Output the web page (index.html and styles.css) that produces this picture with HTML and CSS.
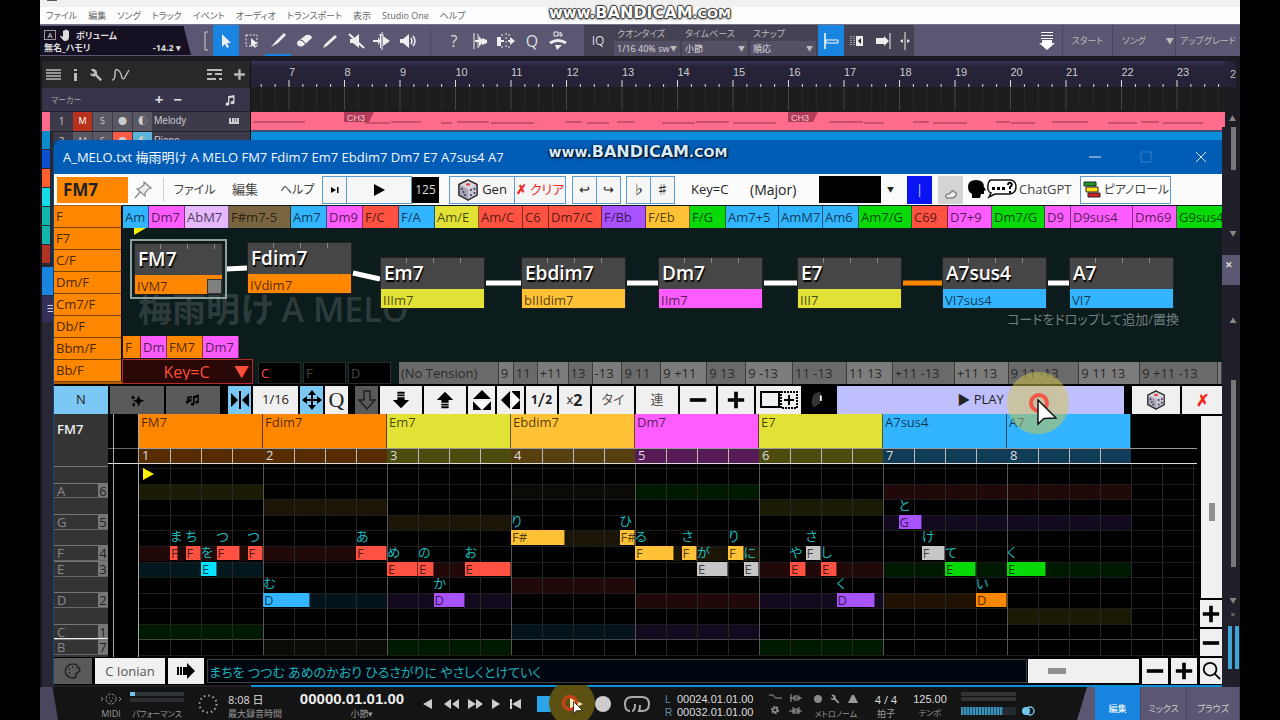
FILE: index.html
```html
<!DOCTYPE html>
<html lang="ja">
<head>
<meta charset="utf-8">
<title>A_MELO.txt</title>
<link rel="stylesheet" href="styles.css">
</head>
<body>
<svg class="defs" aria-hidden="true">
  <symbol id="i-dice" viewBox="0 0 22 22"><path d="M11 1 20 5.500V16L11 21 2 16V5.500Z" fill="#ddd6e0" stroke="#333" stroke-width="1.300"/><path d="M11 10V21L2 16V5.500Z" fill="#aaa4b4"/><path d="M11 10 20 5.500V16L11 21Z" fill="#c9c3d2"/><path d="M11 1 20 5.500V16L11 21 2 16V5.500Z" fill="none" stroke="#333" stroke-width="1.300"/><ellipse cx="11" cy="5.500" rx="2.200" ry="1.300" fill="#d44"/><g fill="#335"><circle cx="5" cy="10" r="1"/><circle cx="8" cy="16" r="1"/><circle cx="6.500" cy="13" r="1"/><circle cx="14" cy="11" r="1"/><circle cx="17.500" cy="10" r="1"/><circle cx="14" cy="16" r="1"/><circle cx="17.500" cy="14" r="1"/></g></symbol>
  <symbol id="i-cursor" viewBox="0 0 20 28"><path d="M1 1V25L7 19.500 19 19Z" fill="#fff" stroke="#111" stroke-width="1.500"/></symbol>
  <symbol id="i-minus" viewBox="0 0 22 22"><path d="M2 9h18v4H2z"/></symbol>
  <symbol id="i-plus" viewBox="0 0 22 22"><path d="M9 2h4v7h7v4h-7v7H9v-7H2V9h7z"/></symbol>
  <symbol id="i-down" viewBox="0 0 22 22"><path d="M7 2h8v2H7zm0 3h8v2H7zm0 3h8v3h5l-9 9-9-9h5z"/></symbol>
  <symbol id="i-note" viewBox="0 0 22 22"><path d="M8 5 18 3v12a3 2.500 0 1 1-2-2V7l-6 1v9a3 2.500 0 1 1-2-2z"/></symbol>
  <symbol id="i-wrench" viewBox="0 0 16 16"><path d="M2 2a4.500 4.500 0 0 1 7 5l6 6-2 2-6-6a4 4 0 0 1-6-3l3 1 2-2z"/></symbol>
</svg>

<div class="stage">
<div class="daw">
  <div class="edge"><i></i></div>
  <nav class="menubar">
    <a href="#">ファイル</a><a href="#">編集</a><a href="#">ソング</a><a href="#">トラック</a><a href="#">イベント</a><a href="#">オーディオ</a><a href="#">トランスポート</a><a href="#">表示</a><a href="#">Studio One</a><a href="#">ヘルプ</a>
  </nav>

  <div class="toolbar">
    <div class="param">
      <div class="param-row"><span class="abox">A</span><svg width="12" height="12" viewBox="0 0 12 12" fill="#ddd"><path d="M3 6V2q1-1 1.500 0V5V1q1-1 1.500 0V5V1q1-1 1.500 0V5V2q1-1 1.500 0V8q0 4-4 4Q3 12 0 7q1-1 3 1z"/></svg><b>ボリューム</b></div>
      <div class="param-row small"><b>無名_ハモリ</b><b class="value">-14.2 ▾</b></div>
    </div>
    <div class="tools" id="tools">
      <svg class="bracket" width="14" height="22" viewBox="0 0 14 22" fill="none" stroke="#ccc"><path d="M9 2H6V20h3"/></svg>
      <button class="on" aria-label="選択"><svg viewBox="0 0 20 20"><path d="M6 3v13l3-3 2 4 2-1-2-4h4z"/></svg></button>
      <button aria-label="範囲"><svg viewBox="0 0 20 20"><path d="M4 4h11v11H4z" fill="none" stroke="#eee" stroke-dasharray="2 1.500"/><path d="m9 7v9l2-2 2 3 1-1-1-3h3z"/></svg></button>
      <button class="under" aria-label="分割"><svg viewBox="0 0 20 20"><path d="M16 3 18 5 10 13 3 17 8 11z"/></svg></button>
      <button aria-label="消しゴム"><svg viewBox="0 0 20 20"><path d="m3 11 9-7q5-1 6 3l-9 8q-6 2-6-4z"/><path d="m6 9q4 0 5 4" stroke="#555" fill="none"/></svg></button>
      <button aria-label="ペイント"><svg viewBox="0 0 20 20"><path d="M15 4 17 6 7 15 3 17 5 13z"/></svg></button>
      <button aria-label="ミュート"><svg viewBox="0 0 20 20"><path d="M4 8h3l6-5v14l-6-5H4z"/><path d="m3 3 15 14" stroke="#eee" stroke-width="2"/></svg></button>
      <button aria-label="ベンド"><svg viewBox="0 0 20 20"><path d="M1 9h5V6l2 3V3h1v14H8v-6l-2 3v-3H1zM11 5l7 5-7 5z"/><path d="M10 1v18M7 4h5" stroke="#eee"/></svg></button>
      <button aria-label="リッスン"><svg viewBox="0 0 20 20"><path d="M2 8h3l6-5v14l-6-5H2z"/><path d="M13 7q2 3 0 6M15 5q4 5 0 10" fill="none" stroke="#eee" stroke-width="1.500"/></svg></button>
      <span class="gap"></span>
      <button class="glyph">?</button>
      <button aria-label="整列"><svg viewBox="0 0 20 20"><path d="M4 2v16M8 3v14" stroke="#eee"/><path d="M5 9h4V5l3 4V7l5 2v3l-5 2v-2l-3 4v-5H5z"/></svg></button>
      <button aria-label="リップル"><svg viewBox="0 0 20 20"><path d="M1 6h4v3h3v2H5v4H1zM12 9h2V6l5 4-5 4v-3h-2z"/><path d="M10 2v16M6 3v3m0 9v3m7-15v3m0 9v3" stroke="#eee" stroke-dasharray="2"/></svg></button>
      <button class="glyph">Q</button>
      <button aria-label="マクロ"><svg viewBox="0 0 20 20"><path d="M2 12q8-5 16 0" fill="none" stroke="#eee" stroke-width="3"/><path d="M7 14h7l-5 5z"/><path d="M6 1h4v4H6zM12 1v4h2V3z" fill="none" stroke="#eee"/></svg></button>
    </div>
    <div class="quant">
      <span class="iq">IQ</span>
      <label>クオンタイズ<span class="pick"><select><option>1/16 40% sw</option></select></span></label>
      <label>タイムベース<span class="pick"><select><option>小節</option></select></span></label>
      <label>スナップ<span class="pick"><select><option>順応</option></select></span></label>
      <button class="on" aria-label="スナップ切替"><svg viewBox="0 0 20 20"><path d="M4 2v16" stroke="#fff" stroke-width="1.500"/><path d="M5 9h12v3H5z" fill="#1a85dc" stroke="#fff"/></svg></button>
      <button aria-label="左"><svg viewBox="0 0 20 20"><path d="M9 5h7v10H9z"/><path d="m14 7-3 3 3 3z" fill="#222"/><path d="M4 5v10M7 5v10" stroke="#eee" stroke-dasharray="1"/></svg></button>
      <button aria-label="右"><svg viewBox="0 0 20 20"><path d="M3 7h8V5l5 5-5 5v-2H3z"/><path d="M17 2v16" stroke="#eee"/></svg></button>
      <button class="thin" aria-label="中"><svg viewBox="0 0 20 20"><path d="M10 1v18" stroke="#eee"/><path d="m8 8-3 2 3 2zM12 8l3 2-3 2z"/></svg></button>
    </div>
    <div class="right">
      <svg class="dl" width="18" height="20" viewBox="0 0 18 20" fill="#fff"><path d="M3 1h12v1H3zm0 3h12v1H3zm0 3h12v1H3zM4 9h10v3h3l-8 7-8-7h3z"/></svg>
      <button class="p1">スタート</button><button class="p2">ソング<i>▼</i></button><button class="p3">アップグレード</button>
    </div>
  </div>

  <div class="workspace">
    <div class="lanes">
      <div class="panel-head">
        <svg width="15" height="13" viewBox="0 0 15 13" stroke="#bbb" stroke-width="1.500"><path d="M0 2h15M0 5h15M0 8h15M0 11h15"/></svg>
        <svg width="6" height="14" viewBox="0 0 6 14" fill="#bbb"><path d="M2 1h3v2H2zM2 5h3v8H2z"/></svg>
        <svg width="14" height="14" fill="#bbb"><use href="#i-wrench"/></svg>
        <svg class="curve" width="20" height="14" viewBox="0 0 20 14" fill="none" stroke="#bbb" stroke-width="1.500"><path d="M1 12Q4 12 4 6T7 2t4 8q2 2 3-1l4-7"/></svg>
        <svg width="15" height="13" viewBox="0 0 15 13" stroke="#bbb" stroke-width="2"><path d="M0 2h15M0 6h5m3 0h7M0 11h9m3 0h3"/></svg>
        <svg width="13" height="13" viewBox="0 0 22 22" fill="#bbb"><use href="#i-plus"/></svg>
      </div>
      <div class="marker"><span>マーカー</span><b>+</b><b>−</b><svg width="14" height="14" fill="#ddd"><use href="#i-note"/></svg></div>
      <div class="track"><i class="pink"></i><span class="num">1</span><b class="m">M</b><b>S</b><b>●</b><b>◐</b><span class="name">Melody</span><svg width="10" height="7" viewBox="0 0 10 7" fill="none" stroke="#ccc" stroke-width="2"><path d="M1 0v5h8V0M4 0v5M6.500 0v5"/></svg></div>
      <div class="track t2"><i class="blue"></i><span class="num">2</span><b>M</b><b>S</b><b class="r">●</b><b class="c">◐</b><span class="name">Piano</span></div>
    </div>
    <div class="arrange">
      <svg class="ruler" id="ruler"></svg>
      <svg class="clip" id="clip"></svg>
    </div>
    <div class="vbar"><i class="next">2</i><i class="up">▲</i></div>
  </div>

  <div class="transport">
    <i class="slant"></i>
    <div class="cell midi"><svg width="24" height="14" viewBox="0 0 24 14" fill="none" stroke="#888"><circle cx="12" cy="7" r="5" stroke-dasharray="3 1"/><path d="m2 5 2 2-2 2m18-4 2 2-2 2"/><path d="M10 6h1m2 0h1m-3 3h2"/></svg><small>MIDI</small></div>
    <div class="cell perf"><span class="bars"><i></i></span><small class="k">パフォーマンス</small></div>
    <svg class="dots" width="20" height="20" viewBox="0 0 20 20" fill="none" stroke="#aaa" stroke-width="2"><circle cx="10" cy="10" r="8.500" stroke-dasharray="1.500 2.950"/></svg>
    <div class="cell rec"><span>8:08 日</span><small>最大録音時間</small></div>
    <div class="cell time"><span class="big">00000.01.01.00</span><small>小節▾</small></div>
    <div class="play-row">
      <button aria-label="戻る"><svg viewBox="0 0 24 16"><path d="M16 3v10L7 8z"/></svg></button>
      <button aria-label="早戻し"><svg viewBox="0 0 24 16"><path d="M11 3v10L4 8zM19 3v10l-7-5z"/></svg></button>
      <button aria-label="早送り"><svg viewBox="0 0 24 16"><path d="M4 3v10l8-5zM12 3v10l7-5z"/></svg></button>
      <button class="nar" aria-label="進む"><svg viewBox="0 0 24 16"><path d="M8 3v10l8-5z"/></svg></button>
      <button aria-label="先頭"><svg viewBox="0 0 24 16"><path d="M6 3h2v10H6zM17 3v10L8 8z"/></svg></button>
    </div>
    <button class="stop" aria-label="停止"></button>
    <button class="go" aria-label="再生"><span class="halo small"></span><svg width="16" height="16" viewBox="0 0 16 16" fill="#ffe9b0"><path d="M2 2v12l13-6z"/></svg><i class="ring"></i><svg class="cur" width="10" height="14"><use href="#i-cursor"/></svg></button>
    <button class="recbtn" aria-label="録音"></button>
    <svg class="loop" width="26" height="18" viewBox="0 0 26 18" fill="none" stroke="#aaa" stroke-width="2"><path d="M8 16q3 0 3-7M6 16q-5 0-5-7 0-7 7-7h10q7 0 7 7 0 7-7 7h-3q1-2 1-6"/></svg>
    <div class="cell loc"><span><em>L</em>00024.01.01.00</span><span><em>R</em>00032.01.01.00</span></div>
    <svg class="mini" width="36" height="26" viewBox="0 0 36 26" fill="none" stroke="#999"><path d="M1 4h4q2 4 4 3h5M22 7h12M23 3v8m3-6v4h5V5z"/><circle cx="7" cy="19" r="3" stroke-width="2" stroke-dasharray="2 1"/><circle cx="7" cy="19" r="2"/><path d="M21 20h13M25 16v7m6-7v7m-5-5h4v4h-4z" /></svg>
    <div class="cell metro"><span class="mrow"><i></i><svg width="10" height="10" fill="#999"><use href="#i-wrench"/></svg><svg width="10" height="10" viewBox="0 0 10 10" fill="#999"><path d="M4 1h2l4 8H0zM5 5l4-4"/></svg></span><small class="k">メトロノーム</small></div>
    <div class="cell sig"><span>4 / 4</span><small>拍子</small></div>
    <div class="cell tempo"><span>125.00</span><small class="k">テンポ</small></div>
    <div class="meters"><i></i><i></i><i class="lv"></i></div>
    <svg class="ster" width="14" height="10" viewBox="0 0 14 10"><circle cx="5" cy="5" r="4" fill="#6fc4ea"/><circle cx="9" cy="5" r="4" fill="none" stroke="#6fc4ea" stroke-width="1.500"/></svg>
    <span class="spring"></span>
    <div class="views"><button class="on">編集</button><button>ミックス</button><button>ブラウズ</button></div>
  </div>
</div>

<div class="strip" aria-hidden="true"><i class="s1"></i><i class="s2"></i><i class="s3"></i><i class="s4"></i><i class="s5"></i><i class="s5"></i><i class="s6"></i><i class="s7"></i><i class="s8">≡</i></div>
<div class="rstrip" aria-hidden="true"><i class="thumb1"></i><span>▼</span><b>✕</b><span class="u">▲</span><i class="thumb2"></i><span>▼</span><span>✕</span><div class="vu"><i></i><i></i></div></div>
<div class="mark top"><span>www.</span><b>BANDICAM</b><i>.COM</i></div>

<main class="win">
  <header class="title"><span>A_MELO.txt 梅雨明け A MELO FM7 Fdim7 Em7 Ebdim7 Dm7 E7 A7sus4 A7</span>
    <div class="ctl">
      <button aria-label="最小化"><svg viewBox="0 0 12 12"><path d="M0 6h12"/></svg></button>
      <button class="dim" aria-label="最大化"><svg viewBox="0 0 12 12"><path d="M1 1h10v10H1z"/></svg></button>
      <button aria-label="閉じる"><svg viewBox="0 0 12 12"><path d="M1 1l10 10M11 1 1 11"/></svg></button>
    </div>
    <div class="mark sub"><span>www.</span><b>BANDICAM</b><i>.COM</i></div>
  </header>

  <div class="wbar">
    <button class="cur-chord">FM7</button>
    <svg class="pin" width="18" height="18" viewBox="0 0 18 18" fill="#eee" stroke="#888" stroke-width="1.200"><path d="M10 1 17 7 15 8 14 8 11 12 11 15 3 8 6 7 10 4zM6 11 1 17"/></svg>
    <a class="m1" href="#">ファイル</a><a class="m2" href="#">編集</a><a class="m3" href="#">ヘルプ</a>
    <button class="bx w24" aria-label="次へ"><svg width="10" height="8" viewBox="0 0 10 8"><path d="M1 1v6l5-3zM7 1h1.500v6H7z"/></svg></button>
    <button class="bx w66" aria-label="再生"><svg width="12" height="12" viewBox="0 0 12 12"><path d="M1 0v12l11-6z"/></svg></button>
    <span class="bpm">125</span>
    <button class="bx w66 g1"><svg width="22" height="22"><use href="#i-dice"/></svg>Gen</button><button class="bx w52 red"><b>✗</b>クリア</button>
    <button class="bx w24 g2">↩</button><button class="bx w24">↪</button>
    <button class="bx w24 g3">♭</button><button class="bx w24">♯</button>
    <span class="key">Key=C</span><span class="maj">(Major)</span>
    <span class="pick blackpick"><select aria-label="色"><option></option></select></span>
    <button class="bluebtn">|</button><button class="graybtn" aria-label="形"><svg width="14" height="10" viewBox="0 0 14 10" fill="#eee" stroke="#888" stroke-width="1.500"><path d="M2 8q-1-3 3-3l3-3q2-1 2 1 3 0 2 3t-4 3H3z"/></svg></button>
    <button class="gpt"><svg width="50" height="22" viewBox="0 0 50 22"><path d="M9 1q8 0 8 7l2 3-2 1v3h-3l-1 4H5v-4Q1 13 1 8q0-7 8-7z"/><path d="M24 1h20q5 1 5 7t-6 7H28l-6 3 2-4q-4-2-3-7 0-5 3-6z" fill="#fff" stroke="#111" stroke-width="1.500"/><path d="M25 8h3v3h-3zm5 0h3v3h-3zm5 0h3v3h-3z"/><path d="M41 6q0-3 3-2 2 2-1 4v2m0 2v2" fill="none" stroke="#000" stroke-width="2"/></svg>ChatGPT</button>
    <button class="bx roll"><svg width="18" height="18" viewBox="0 0 18 18" stroke="#222"><path d="M1 1h12v4H1z" fill="#1a9a2a"/><path d="M3 6h12v5H3z" fill="#ffe01a"/><path d="M5 12h12v4H5z" fill="#d8202c"/></svg>ピアノロール</button>
  </div>

  <section class="upper">
    <div class="side" id="side"></div>
    <div class="board">
      <div class="chips" id="chips"></div>
      <div class="canvas" id="canvas"><div class="ghost">梅雨明け A MELO</div><svg class="wires" id="wires"></svg><div class="hint">コードをドロップして追加/置換</div></div>
      <div class="chips recent" id="recent"></div>
      <div class="keyrow">
        <span class="pick keysel"><select aria-label="Key"><option>Key=C</option></select></span>
        <span class="slot lit">C</span><span class="slot">F</span><span class="slot">D</span>
        <div class="tens" id="tens"></div>
      </div>
    </div>
  </section>

  <div class="edit">
    <button class="w54 sky">N</button><button class="w54 gray" aria-label="装飾"><svg class="sm" viewBox="0 0 20 20"><path d="M12 4l2 5 5 2-5 2-2 5-2-5-5-2 5-2zM5 4l1 2 2 1-2 1-1 2-1-2-2-1 2-1zM6 13l1 2 1 1-1 1-1 2-1-2-1-1z"/></svg></button><button class="w54 gray" aria-label="音符"><svg class="sm" viewBox="0 0 22 22"><path d="M3 7l6-2v7a2 2 0 1 1-1-2V8L5 9v5a2 2 0 1 1-2-2z"/><path d="M11 6l8-3v11a2.500 2 0 1 1-2-2V7l-4 2v8a2.500 2 0 1 1-2-2z"/></svg></button>
    <button class="w24 sky gl" aria-label="反転"><svg viewBox="0 0 20 20"><path d="M1 3v14l7-7zM19 3v14l-7-7zM9 1h2v18H9z"/></svg></button><button class="w46">1/16</button><button class="w24 sky" aria-label="移動"><svg viewBox="0 0 20 20"><path d="M10 0 14 5H11V9h4V6l5 4-5 4v-3h-4v4h3l-4 5-4-5h3v-4H5v3l-5-4 5-4v3h4V5H6z"/></svg></button><button class="w24 serif">Q</button>
    <button class="w24 gray gs" aria-label="下"><svg viewBox="0 0 20 20"><path d="M7 1h6v9h5l-8 9-8-9h5z" fill="none" stroke="#222" stroke-width="1.500"/></svg></button><button class="w42" aria-label="下げる"><svg><use href="#i-down"/></svg></button><button class="w42" aria-label="上げる"><svg class="flip"><use href="#i-down"/></svg></button>
    <button class="w28" aria-label="上下反転"><svg viewBox="0 0 20 20"><path d="M10 0 19 9H1zM1 11l9 9 9-9v9H1z"/><path d="M1 11h18l-9 9z" fill="#fff"/></svg></button><button class="w28" aria-label="左右反転"><svg viewBox="0 0 20 20"><path d="M9 1v18L0 10zM11 1h8v18h-8z"/><path d="M11 2v16l8-8z" fill="#fff"/></svg></button>
    <button class="w32 half"><sup>1</sup><span>/</span><sub>2</sub></button><button class="w32"><span>x</span><b>2</b></button><button class="w42 s">タイ</button><button class="w42 s">連</button><button class="w38" aria-label="減"><svg><use href="#i-minus"/></svg></button><button class="w38" aria-label="増"><svg><use href="#i-plus"/></svg></button>
    <button class="w46" aria-label="追加"><svg class="wide" viewBox="0 0 40 20" fill="none" stroke="#000" stroke-width="2"><path d="M2 2h18v15H2z"/><path d="M22 2h16v16H22z" stroke-dasharray="2 1"/><path d="M30 5v10m-5-5h10"/></svg></button>
    <svg class="knob" width="32" height="22" viewBox="0 0 32 22"><path d="M18 2Q8 2 8 13q0 5 3 6l6-4z" fill="#333"/><path d="M18 6v6" stroke="#fff" stroke-width="2" fill="none"/></svg>
    <button class="play">▶ PLAY<span class="halo"></span><i class="ring"></i><svg class="cur" width="20" height="28"><use href="#i-cursor"/></svg></button>
    <button class="w50" aria-label="ランダム"><svg class="die"><use href="#i-dice"/></svg></button><button class="w40 red"><b>✗</b></button>
  </div>

  <section class="pianoroll">
    <div class="keys"><div class="khead">FM7</div><div class="kstub"></div><div class="krows" id="keys"></div></div>
    <div class="gutter"><i></i></div>
    <div class="rollmain">
      <div class="bars8" id="heads"></div>
      <div class="beats" id="beats"></div>
      <div class="stub"></div>
      <div class="notes" id="notes"></div>
    </div>
    <div class="zoomcol"><input type="range" class="v" aria-label="縦スクロール" value="53"><button aria-label="拡大"><svg><use href="#i-plus"/></svg></button><button aria-label="縮小"><svg><use href="#i-minus"/></svg></button></div>
  </section>

  <footer class="lyrics">
    <button class="pal" aria-label="色"><svg width="18" height="18" viewBox="0 0 18 18" fill="none" stroke="#222" stroke-width="1.500"><path d="M9 2a7 7 0 1 0 3 13q-1-3 1-4t3-3q-2-6-7-6z"/><path d="M5 7h1m2-2h1m3 1h1M5 11h1" stroke-width="2"/></svg></button>
    <button class="scale">C Ionian</button>
    <button class="arr" aria-label="適用"><svg width="20" height="18" viewBox="0 0 20 18"><path d="M1 5h2v8H1zm3 0h2v8H4zm3 0h4V1l8 8-8 8v-4H7z"/></svg></button>
    <input type="text" aria-label="歌詞" value="まちを つつむ あめのかおり ひるさがりに やさしくとけていく">
    <input type="range" class="h" aria-label="横スクロール" value="21">
    <button class="z" aria-label="縮小"><svg><use href="#i-minus"/></svg></button><button class="z" aria-label="拡大"><svg><use href="#i-plus"/></svg></button><button class="z last" aria-label="検索"><svg viewBox="0 0 22 22" fill="none" stroke="#000" stroke-width="2"><circle cx="10" cy="9" r="7"/><path d="m15 14 6 6"/></svg></button>
  </footer>
</main>
</div>
<script src="script.js"></script>
</body>
</html>
```

FILE: styles.css
```css
* { box-sizing: border-box; }
body { margin: 0; background: #000; font-family: "Open Sans", "Noto Sans CJK JP", sans-serif; font-feature-settings: "palt"; font-size: 13px; line-height: 1; }
button, select, input { font: inherit; font-feature-settings: inherit; color: inherit; border: 0; padding: 0; margin: 0; background: none; border-radius: 0; }
button { display: flex; align-items: center; justify-content: center; white-space: nowrap; flex: none; }
a { color: inherit; text-decoration: none; }
i, em { font-style: normal; }
svg { display: block; flex: none; }
.defs { position: absolute; width: 0; height: 0; }
.stage { position: relative; margin: 0 40px; height: 100vh; overflow: hidden; }
.daw { display: flex; flex-direction: column; height: 100%; background: #211f2a; color: #ccc; }
.edge { height: 7px; background: #f0f0f0; }
.edge i { display: block; width: 10px; height: 1px; margin-left: 7px; background: #555; }
.menubar { display: flex; gap: 11px; padding: 4px 6px 0; height: 17px; background: #fdfdfd; color: #666; font-size: 9px; white-space: nowrap; }

.pick { position: relative; display: block; }
.pick select { appearance: none; width: 100%; }
.pick::after { content: "▼"; position: absolute; right: 3px; top: 4px; font-size: 7px; pointer-events: none; }

/* studio toolbar */
.toolbar { display: flex; height: 37px; background: #5b5671; border-bottom: 5px solid #1b1a22; border-top: 1px solid #77728a; }
.param { width: 151px; margin: 1px 0; padding: 3px 10px 0 4px; background: #151022; clip-path: polygon(0 0, 95% 0, 100% 100%, 0 100%); color: #ddd; font-size: 9px; }
.param-row { display: flex; align-items: center; gap: 4px; height: 12px; }
.param-row b + b { margin-left: auto; }
.abox { border: 1px solid #999; width: 12px; font-size: 8px; text-align: center; }
.tools, .quant, .right { display: flex; align-items: stretch; }
.tools { margin-left: 8px; padding-right: 13px; }
.bracket { align-self: center; }
.toolbar button { width: 26px; color: #ddd; }
.toolbar button svg { width: 20px; height: 20px; fill: #eee; }
.toolbar .on { background: #1a85e0; }
.toolbar .under { border-bottom: 2px solid #1a85e0; }
.gap { width: 18px; border-left: 1px solid #4d485f; margin-left: 9px; margin-right: -7px; }
.toolbar .glyph { font-size: 16px; }
.quant { background: #454253; gap: 2px; }
.iq { width: 28px; align-self: center; text-align: center; font-size: 12px; color: #ddd; }
.quant label { width: 66px; font-size: 9px; padding-top: 4px; color: #bbb; }
.quant label { padding-left: 3px; }
.quant .pick { margin: 3px 0 0 -3px; background: #555065; }
.quant select { height: 15px; padding-left: 3px; color: #ddd; }
.quant .thin { width: 18px; }
.quant button + button { margin-left: -2px; }
.right { flex: 1; justify-content: flex-end; min-width: 0; font-size: 9px; }
.dl { align-self: center; margin-right: 6px; }
.toolbar .right button { border-left: 1px solid #4a465c; color: #bbb; }
.toolbar .p1 { width: 50px; }
.toolbar .p2 { width: 63px; gap: 20px; padding-left: 8px; }
.p2 i { font-size: 8px; }
.toolbar .p3 { width: 65px; }

/* arrangement */
.workspace { flex: 1; display: flex; min-height: 0; }
.lanes { width: 211px; border-right: 1px solid #111; border-left: 2px solid #16151c; }
.panel-head { display: flex; align-items: center; gap: 11px; height: 27px; padding: 0 4px; background: #28282b; }
.panel-head .curve { margin: 0 auto 0 -3px; }
.marker { display: flex; align-items: center; gap: 10px; height: 23px; padding: 0 13px 0 9px; background: #37334a; font-size: 8px; color: #aaa; }
.marker b { font-size: 15px; color: #ddd; }
.marker b:nth-child(2) { margin-left: auto; }
.marker svg { margin-left: 31px; }
.track { display: flex; gap: 1px; align-items: stretch; height: 19px; margin-top: 1px; background: #3d3a49; font-size: 10px; line-height: 18px; }
.track i { width: 8px; }
.track .num { width: 21px; text-align: center; }
.track b { width: 19px; background: #5a5863; text-align: center; font-weight: 400; font-size: 9px; }
.track .m { background: #b8301e; color: #fff; }
.track .r { background: #ff5a44; }
.track .c { background: #58b4d8; }
.track .name { width: 75px; font-family: "Liberation Sans", sans-serif; padding-left: 1px; }
.track svg { align-self: center; }
.pink { background: #ff6b8b; }
.blue { background: #0b8cd8; }
.arrange { flex: 1; min-width: 0; background: #0b8fdb; }
.ruler { width: 100%; height: 51px; background: linear-gradient(#38345a 0, #262338 6px, #262338 26px, #1d1d1e 26px); }
.clip { width: 100%; height: 20px; background: #ff6b8b; border-bottom: 2px solid #36506e; }
.vbar { width: 15px; background: #1c1b22; font-size: 7px; text-align: center; color: #888; }
.vbar i { display: block; }
.vbar .next { height: 54px; width: 11px; padding-top: 7px; font: 11px "Liberation Sans", sans-serif; text-align: right; color: #bbb; background: linear-gradient(#262338, #262338) 0 0 / 11px 26px no-repeat; }

/* transport */
.transport { display: flex; align-items: center; height: 33px; background: #141414; color: #ddd; font-size: 11px; white-space: nowrap; }
.slant { width: 18px; height: 33px; background: #4a4660; clip-path: polygon(0 0, 70% 0, 100% 100%, 0 100%); flex: none; }
.cell { display: flex; flex-direction: column; gap: 2px; align-items: center; justify-content: flex-end; height: 30px; flex: none; }
.cell span { height: 13px; line-height: 13px; }
.cell small { font-size: 9px; height: 11px; line-height: 11px; color: #999; }
.cell .k { font-size: 8px; }
.midi { width: 28px; margin-left: 39px; }
.perf { width: 54px; margin-left: 5px; }
.cell .bars { width: 54px; height: 10px; margin-bottom: 4px; border-top: 4px solid #2e3438; border-bottom: 4px solid #2b2e33; }
.bars i { display: block; width: 5px; height: 4px; margin-top: -4px; background: #6fc4ea; }
.dots { margin-left: 14px; }
.rec { align-items: flex-start; width: 60px; margin-left: 10px; }
.time { width: 116px; margin-left: 6px; }
.time small { padding-left: 20px; }
.cell .big { font: bold 15px/15px "Liberation Sans", sans-serif; height: 15px; color: #eee; }
.play-row { display: flex; margin-left: 6px; }
.play-row button { width: 24px; }
.play-row .nar { width: 16px; }
.play-row svg { width: 24px; height: 16px; fill: #ccc; }
.stop { width: 16px; height: 16px; background: #2aa5e8; margin-left: 9px; }
.go { position: relative; width: 16px; margin-left: 15px; }
.recbtn { width: 16px; height: 16px; border-radius: 50%; background: #ccc; margin-left: 11px; }
.loop { margin-left: 13px; }
.loc { margin-left: 15px; gap: 0; font-family: "Liberation Sans", sans-serif; width: 87px; align-items: flex-start; }
.loc em { display: inline-block; width: 12px; font-size: 10px; color: #5a8fb0; }
.mini { margin-left: 16px; }
.metro { width: 48px; margin-left: 8px; }
.mrow { display: flex; gap: 8px; align-items: center; }
.mrow i { width: 8px; height: 8px; border-radius: 50%; background: #888; }
.sig { width: 40px; margin-left: 6px; }
.tempo { width: 40px; margin-left: 4px; font-family: "Liberation Sans", "Noto Sans CJK JP", sans-serif; }
.meters { display: flex; flex-direction: column; gap: 1px; width: 55px; margin-left: 11px; }
.meters i { height: 4px; background: #333; }
.meters .lv { height: 8px; margin-top: 5px; background: repeating-linear-gradient(90deg, #3c8fb8 0 2px, #22506a 2px 3px) 0 0 / 42px 8px no-repeat, #23292e; }
.ster { margin: 14px 0 0 5px; }
.spring { flex: 1; }
.views { display: flex; height: 33px; background: #5b5671; padding-left: 18px; clip-path: polygon(10px 0, 100% 0, 100% 100%, 0 100%); flex: none; }
.views button { width: 46px; padding-top: 9px; color: #ccc; border-right: 1px solid #4a465c; font-size: 9px; }
.views button:last-child { width: 53px; }
.views .on { background: #1a85e0; color: #fff; }

/* edges seen beside the floating window */
.strip { position: absolute; left: 2px; top: 131px; width: 11px; bottom: 33px; display: flex; flex-direction: column; gap: 1px; background: #2a2735; color: #eee; font-size: 11px; }
.strip i { height: 18px; width: 8px; }
.s1 { background: #0b8cc8; } .s2 { background: #0b50d0; } .s3 { background: #ff5f2c; } .s4 { background: #14dbe6; } .s5 { background: #12b4ac; } .s6 { background: #b03426; }
.strip .s7 { height: 28px; width: 11px; background: #1a85e0; margin-top: 3px; }
.strip .s8 { height: 26px; width: 11px; background: #35305a; padding: 7px 0 0 4px; }
.rstrip { position: absolute; right: 0; top: 127px; bottom: 33px; width: 18px; display: flex; flex-direction: column; align-items: center; background: #211f2a; padding-left: 4px; color: #888; font-size: 7px; }
.rstrip .thumb1 { width: 5px; height: 43px; background: #777; }
.rstrip span { margin-top: 60px; }
.rstrip b { width: 18px; height: 30px; margin: 18px 0 0 -4px; padding: 5px 3px; background: #5b5671; color: #ddd; font-size: 9px; }
.rstrip .u { margin-top: 32px; }
.rstrip .thumb2 { width: 5px; height: 187px; margin-top: 56px; background: #777; }
.rstrip .thumb2 + span { margin-top: 30px; }
.rstrip .thumb2 + span + span { margin-top: 7px; }
.vu { display: flex; gap: 3px; margin-top: 8px; }
.vu i { width: 4px; height: 43px; background: #3fa4d8; }

/* watermark */
.mark { position: absolute; display: flex; align-items: baseline; justify-content: center; font-family: "DejaVu Sans", sans-serif; font-weight: bold; color: #fff; white-space: nowrap; pointer-events: none; text-shadow: 1px 0 1px #333, -1px 0 1px #333, 0 1px 1px #333, 0 -1px 1px #333, 0 1px 3px #333; }
.mark span { font-size: 15px; } .mark b { font-size: 16px; } .mark i { font-size: 13px; }
.top { left: 0; right: 0; top: 5px; }
.sub { left: 0; right: 0; top: 4px; color: #d5ecff; text-shadow: 1px 1px 1px #012, -1px 0 1px #012, 0 1px 3px #012; }
.sub span { font-size: 14px; }

/* floating chord window */
.win { position: absolute; left: 13px; right: 18px; top: 140px; bottom: 35px; display: flex; flex-direction: column; background: #000; overflow: hidden; color: #222; border-left: 1px solid #0b4a80; border-radius: 6px 0 0 0; }
.title { position: relative; display: flex; align-items: center; height: 34px; padding-left: 9px; background: #005cb4; color: #f4f8ff; white-space: nowrap; flex: none; }
.ctl { margin-left: auto; display: flex; }
.ctl button { width: 51px; height: 34px; }
.ctl button:last-child { padding-left: 8px; }
.ctl svg { width: 12px; height: 12px; fill: none; stroke: #dceaff; }
.ctl .dim { opacity: .25; }
.wbar { display: flex; align-items: center; height: 31px; padding-left: 3px; background: #fbfbfb; white-space: nowrap; flex: none; }
.cur-chord { width: 71px; height: 26px; background: #ff8700; font-size: 17px; font-weight: 700; justify-content: flex-start; padding-left: 6px; }
.pin { margin: 0 11px 0 6px; }
.wbar a { color: #444; }
.m1 { border-left: 1px solid #ccc; padding: 6px 0 6px 10px; width: 69px; font-size: 12px; }
.m2 { width: 48px; } .m3 { width: 43px; font-size: 12px; }
.bx { height: 28px; border: 1px solid #5a9ad0; margin-left: -1px; background: #f6f6f6; gap: 3px; }
.w24 { width: 25px; } .w66 { width: 66px; } .w52 { width: 52px; }
.bpm { width: 27px; height: 26px; background: #000; color: #ddd; text-align: center; line-height: 26px; font-size: 12px; }
.wbar .g1 { margin-left: 10px; }
.wbar .g2 { margin-left: 6px; }
.wbar .g3 { margin-left: 5px; }
.bx svg { fill: #000; }
.red { color: #f0281e; }
.key { width: 62px; padding-left: 16px; }
.maj { width: 82px; padding-left: 13px; font-size: 14px; }
.blackpick { width: 77px; }
.blackpick select { width: 62px; height: 27px; background: #000; }
.blackpick::after { right: 2px; top: 10px; }
.bluebtn { width: 25px; height: 28px; background: #0a14f0; color: #ccf; margin-left: 11px; }
.graybtn { width: 25px; height: 28px; background: #d4d4d4; margin: 0 4px 0 6px; padding-top: 8px; }
.gpt { gap: 2px; color: #444; }
.wbar .roll { width: 91px; margin-left: 9px; color: #444; background: #fff; font-size: 12px; }

.upper { display: flex; height: 179px; background: #0c1b1c; flex: none; }
.side { width: 68px; display: grid; grid-auto-rows: 22px; background: #b45f00; border-top: 1px solid #a96010; }
.side button { justify-content: flex-start; padding-left: 2px; background: #ff8700; border-right: 1px solid #000; border-bottom: 1px solid #7a4300; color: #4b2900; }
.board { flex: 1; min-width: 0; display: flex; flex-direction: column; }
.chips { display: flex; padding: 1px 0 0 1px; height: 23px; overflow: hidden; flex: none; }
.chips button { justify-content: flex-start; padding-left: 2px; border-right: 1px solid rgba(0,0,0,.5); color: rgba(0,0,0,.7); }
.n1 { width: 18px; } .n2 { width: 26px; } .n3 { width: 36px; } .n4 { width: 44px; } .n5 { width: 53px; } .n6 { width: 62px; }
.canvas { position: relative; flex: 1; }
.ghost { position: absolute; left: 16px; top: 64px; font-size: 34px; font-weight: 600; color: #2d3b3c; white-space: nowrap; }
.wires { position: absolute; inset: 0; width: 100%; height: 100%; }
.hint { position: absolute; right: 43px; top: 85px; color: #748080; }
.node { position: absolute; width: 105px; height: 52px; display: flex; flex-direction: column; background: #464646; border: 1px solid #222; color: #fff; z-index: 1; }
.node b { flex: 1; padding: 6px 0 0 3px; font-size: 19px; font-weight: 600; text-shadow: 1px 2px 1px #000; background: linear-gradient(#888, #888) 25px 0 / 1px 5px no-repeat, linear-gradient(#888, #888) 52px 0 / 1px 5px no-repeat, linear-gradient(#888, #888) 79px 0 / 1px 5px no-repeat; }
.node span { height: 19px; padding: 5px 0 0 2px; color: rgba(0,0,0,.7); }
.node.sel { width: 89px; outline: 2px solid #91a0a0; outline-offset: 2px; }
.node.sel::after { content: ""; position: absolute; right: 0; bottom: 0; width: 13px; height: 13px; background: #808080; border: 1px solid #333; }
.flag { position: absolute; left: 12px; top: 0; border-left: 12px solid #fff000; border-bottom: 7px solid transparent; }
.keyrow { display: flex; align-items: stretch; height: 25px; margin-top: 1px; flex: none; }
.keysel { width: 131px; color: #ff4e3c; }
.keysel select { height: 25px; border: 1px solid #b02c24; background: #2a0808; text-align: center; text-align-last: center; font-size: 16px; padding-right: 2px; }
.keysel::after { font-size: 15px; right: 4px; top: 5px; }
.slot { width: 43px; margin: 3px 0 0 2px; padding: 4px 2px; border: 1px solid #2a2a2a; background: #000; color: #444; }
.lit { margin-left: 5px; color: #ff4e3c; }
.tens { flex: 1; min-width: 0; margin: 3px 0 0 8px; display: grid; grid-template-columns: 100fr 15fr 24fr 31fr 24fr 30fr 39fr 46fr 39fr 47fr 54fr 46fr 62fr 54fr 71fr 61fr 78fr 4fr; }
.tens button { min-width: 0; justify-content: flex-start; padding-left: 2px; background: #6a6a6a; border-right: 1px solid #3c3c3c; color: #2a2a2a; }
.tens button:nth-child(even) { background: #7c7c7c; }

.edit { display: flex; align-items: center; gap: 2px; height: 30px; padding-top: 1px; flex: none; }
.edit button { height: 28px; background: #f0f0f0; border: 0; }
.edit svg { width: 20px; height: 20px; }
.edit .sm { width: 16px; height: 16px; }
.edit .wide { width: 40px; }
.edit .knob { width: 32px; }
.edit .flip { transform: rotate(180deg); }
.edit .sky { background: #7cc8f4; } .edit .gray { background: #5a5a5a; }
.edit .w54 { width: 54px; } .edit .w24 { width: 23px; } .edit .w28 { width: 27px; } .edit .w32 { width: 31px; } .edit .w38 { width: 36px; } .edit .w40 { width: 40px; } .edit .w42 { width: 42px; } .edit .w46 { width: 45px; } .edit .w50 { width: 48px; }
.edit .gl { margin-left: 6px; } .edit .gs { margin-left: 5px; }
.serif { font: 22px "Liberation Serif", serif; }
.half span { font-size: 20px; } .half sup, .half sub { font-size: 12px; font-weight: 700; }
.edit b { font-size: 16px; }
.edit .s { color: #555; }
.edit .play { position: relative; z-index: 5; flex: 1; background: #bfbfff; margin-right: 6px; }
.halo { position: absolute; right: 55px; top: -14px; width: 62px; height: 62px; border-radius: 50%; background: rgba(210,200,70,.5); }
.halo.small { width: 46px; height: 46px; right: -11px; top: -16px; background: #5c5012; }
.ring { position: absolute; right: 75px; top: 7px; width: 20px; height: 20px; border: 4px solid #f2574a; border-radius: 50%; }
.edit .play .cur { position: absolute; right: 67px; top: 13px; width: 20px; height: 28px; }
.go svg { position: relative; }
.go .ring { right: 6px; top: -1px; width: 16px; height: 16px; border: 3px solid #d04018; }
.go .cur { position: absolute; right: 1px; top: 5px; }

/* piano roll */
.pianoroll { flex: 1; min-height: 0; display: flex; color: rgba(0,0,0,.7); }
.keys { width: 54px; display: flex; flex-direction: column; background: #343434; color: #888; flex: none; }
.khead { height: 49px; padding: 9px 3px; color: #eee; font-weight: 600; }
.kstub, .stub { height: 4px; }
.kstub { border-bottom: 1px solid #777; }
.krows, .notes { flex: 1; min-height: 0; display: grid; grid-template-rows: repeat(12, 1fr); margin-bottom: 2px; }
.krows div { display: flex; justify-content: space-between; padding-left: 3px; line-height: 14px; min-height: 0; }
.krows .nat { border-top: 1px solid #777; border-bottom: 1px solid #666; }
.krows .nat b { width: 10px; background: #777; color: #222; font-weight: 400; text-align: center; }
.krows .oct { border-bottom: 1px solid #eee; }
.gutter { width: 30px; padding-left: 5px; flex: none; background: linear-gradient(#666, #666) 0 34px / 100% 1px no-repeat, linear-gradient(#ddd, #ddd) 0 49px / 100% 1px no-repeat; }
.gutter i { display: block; width: 1px; height: 100%; background: #aaa; }
.rollmain { flex: 1; min-width: 0; display: flex; flex-direction: column; border-left: 1px solid #aaa; }
.bars8, .beats { display: grid; grid-template-columns: repeat(8, 124fr) 66fr; border-bottom: 1px solid #999; flex: none; }
.bars8 div { height: 34px; padding: 2px 2px; border-right: 1px solid rgba(0,0,0,.6); }
.beats { border-color: #ddd; color: #ddd; }
.beats div { height: 14px; display: grid; grid-template-columns: repeat(4, 1fr); }
.beats span { border-left: 1px solid #bbb; padding: 0 2px; }
.beats span:first-child { border-color: transparent; }
.notes { position: relative; }
.notes > * { position: absolute; }
.row { left: 0; right: 0; height: 1px; background: #1c1c1c; }
.row.c { background: #444; }
.col { top: -4px; bottom: 0; width: 1px; background: #262626; }
.col.bar { background: #555; }
.note { padding: 1px 1px; border-right: 1px solid rgba(0,0,0,.5); border-bottom: 1px solid #000; white-space: nowrap; }
.lyric { color: #1fb8bd; white-space: nowrap; }
.mark0 { left: 4px; top: 0; border-left: 11px solid #fff000; border-top: 6px solid transparent; border-bottom: 6px solid transparent; }
.zoomcol { width: 25px; padding: 2px 0 1px 3px; display: flex; flex-direction: column; gap: 2px; align-items: flex-end; flex: none; }
.zoomcol button { width: 22px; height: 27px; background: #f0f0f0; }
.zoomcol svg, .z svg { width: 20px; height: 20px; }
input[type=range] { appearance: none; background: #f0f0f0; display: block; min-width: 0; min-height: 0; }
.v { writing-mode: vertical-lr; width: 21px; flex: 1; }
.v::-webkit-slider-thumb { appearance: none; width: 6px; height: 18px; background: #909090; }
.h { width: 111px; height: 24px; flex: none; }
.h::-webkit-slider-thumb { appearance: none; width: 18px; height: 6px; background: #909090; }
.lyrics { display: flex; align-items: center; gap: 3px; height: 28px; flex: none; }
.lyrics button { height: 26px; background: #f0f0f0; }
.lyrics .pal { width: 38px; background: #5a5a5a; }
.lyrics .scale { width: 70px; color: #555; }
.lyrics .arr { width: 36px; }
.lyrics input[type=text] { flex: 1; min-width: 0; height: 24px; background: #00060f; border: 1px solid #3a4044; color: #1fb0b8; padding-left: 1px; margin-right: -2px; }
.z { width: 26px; }
.lyrics .last { width: 22px; }
```

FILE: script.js
```js
const $ = id => document.getElementById(id);
const C = { or: '#ff8700', ye: '#e2e236', am: '#ffc236', mg: '#ff5cff', sk: '#33b4ff', rd: '#ff5242', gr: '#08d908', pu: '#a952ff', br: '#7a6540', li: '#e6b8ff', gy: '#c6c6c6', cy: '#08e4ff' };

function el(parent, tag, cls, text, style) {
  const e = document.createElement(tag);
  if (cls) e.className = cls;
  if (text) e.textContent = text;
  if (style) e.style.cssText = style;
  parent.appendChild(e);
  return e;
}
function svg(parent, tag, attrs, text) {
  const e = document.createElementNS('http://www.w3.org/2000/svg', tag);
  for (const k in attrs) e.setAttribute(k, attrs[k]);
  if (text) e.textContent = text;
  parent.appendChild(e);
  return e;
}

/* arrangement ruler: percentages of its own width */
const W = 974, px = x => (x / W * 100) + '%';
for (let i = -2; i < 68; i++) {
  const x = 38 + i * 13.875, bar = i % 4 === 0;
  svg($('ruler'), 'line', { x1: px(x), x2: px(x), y1: 27, y2: 49, stroke: bar ? '#444' : '#2a2a2c' });
  svg($('ruler'), 'line', { x1: px(x), x2: px(x), y1: bar ? 19 : 23, y2: 26, stroke: '#ddd' });
  if (bar) svg($('ruler'), 'text', { x: px(x), y: 15, fill: '#ccc', 'font-size': 11, 'font-family': 'Liberation Sans' }, String(7 + i / 4));
}
[[2, 54], [114, 139], [140, 170], [190, 201], [206, 238], [240, 283], [314, 331], [336, 358], [366, 384], [411, 444], [445, 478], [482, 525], [578, 612], [613, 633], [662, 678], [682, 716], [745, 759], [760, 784], [801, 837], [857, 886], [890, 908], [912, 952]]
  .forEach(([a, b], i) => svg($('clip'), 'line', { x1: px(a), x2: px(b), y1: 10 + i % 2, y2: 10 + i % 2, stroke: '#8d3850' }));
[93, 537].forEach(x => {
  const g = svg($('clip'), 'svg', { x: px(x), y: 0, width: 30, height: 10 });
  svg(g, 'path', { d: 'M0 0H30L25 10H0z', fill: '#b23c5a' });
  svg(g, 'text', { x: 3, y: 9, fill: '#f0c8d0', 'font-size': 9, 'font-family': 'Liberation Sans' }, 'CH3');
});

/* chord palettes */
'F,F7,C/F,Dm/F,Cm7/F,Db/F,Bbm/F,Bb/F'.split(',').forEach(t => el($('side'), 'button', '', t));
const chip = (box, s) => s.split(' ').forEach(p => {
  const [t, c] = p.split(':');
  el(box, 'button', 'n' + t.length, t, 'background:' + C[c]);
});
chip($('chips'), 'Am:sk Dm7:mg AbM7:li F#m7-5:br Am7:sk Dm9:mg F/C:rd F/A:sk Am/E:ye Am/C:rd C6:rd Dm7/C:rd F/Bb:pu F/Eb:am F/G:gr Am7+5:sk AmM7:sk Am6:sk Am7/G:gr C69:rd D7+9:mg Dm7/G:gr D9:mg D9sus4:mg Dm69:mg G9sus4:gr');
chip($('recent'), 'F:or Dm:mg FM7:or Dm7:mg');
'(No Tension)|9|11|+11|13|-13|9 11|9 +11|9 13|9 -13|11 -13|11 13|+11 -13|+11 13|9 11 -13|9 11 13|9 +11 -13|'.split('|').forEach(t => el($('tens'), 'button', '', t));

/* chord flow */
[['FM7', 'IVM7', 12, 15, 'or', 'sel'], ['Fdim7', 'IVdim7', 125, 14, 'or'], ['Em7', 'IIIm7', 258, 29, 'ye'], ['Ebdim7', 'bIIIdim7', 399, 29, 'am'], ['Dm7', 'IIm7', 536, 29, 'mg'], ['E7', 'III7', 675, 29, 'ye'], ['A7sus4', 'VI7sus4', 820, 29, 'sk'], ['A7', 'VI7', 947, 29, 'sk']].forEach(([t, d, x, y, c, sel]) => {
  const n = el($('canvas'), 'div', 'node ' + (sel || ''), '', `left:${x}px;top:${y}px`);
  el(n, 'b', '', t);
  el(n, 'span', '', d, 'background:' + C[c]);
});
el($('canvas'), 'i', 'flag');
[[104, 41, 125, 40], [231, 45, 258, 51], [364, 55, 399, 55], [505, 55, 536, 55], [642, 55, 675, 55], [781, 55, 820, 55, 1], [926, 55, 947, 55]].forEach(([x1, y1, x2, y2, o]) =>
  svg($('wires'), 'line', { x1, y1, x2, y2, stroke: o ? C.or : '#fff', 'stroke-width': 5 }));

/* piano roll */
const bars = [['FM7', 'or'], ['Fdim7', 'or'], ['Em7', 'ye'], ['Ebdim7', 'am'], ['Dm7', 'mg'], ['E7', 'ye'], ['A7sus4', 'sk'], ['A7', 'sk']];
const dark = { or: '#572c00', ye: '#4c4c10', am: '#573f10', mg: '#571c57', sk: '#103c57' };
bars.forEach(([t, c], i) => {
  el($('heads'), 'div', '', t, 'background:' + C[c]);
  const b = el($('beats'), 'div', '', '', 'background:' + dark[c]);
  for (let k = 0; k < 4; k++) el(b, 'span', '', k ? '' : String(i + 1));
});
['', 'A6', '', 'G5', '', 'F4', 'E3', '', 'D2', '', 'C1', 'B7'].forEach(k => {
  const d = el($('keys'), 'div', k ? 'nat' + (k === 'C1' ? ' oct' : '') : '');
  if (k) { el(d, 'span', '', k[0]); el(d, 'b', '', k[1]); }
});
const N = $('notes'), SPAN = 8 * 124 + 66;
const xp = s => (s * 7.75 / SPAN * 100) + '%', yp = r => (r / 12 * 100) + '%';
const tint = { o: '#1a1a05', r: '#210909', t: '#02171e', g: '#001a02', b: '#1b1508', n: '#04131c', k: '#0c0b08', p: '#140a20', f: '#201102' };
['1o 5r 6t 10g', '2b 5r 8n 11k', '3b 6r 8p 11g', '1k 4b 7r 10n', '1g 5b 8r 10p', '2o 6r 8p 11g', '1r 3p 6g 8f', '1r 3p 6g 9o'].forEach((s, b) => s.split(' ').forEach(p =>
  el(N, 'div', 'band', '', `left:${xp(b * 16)};width:${xp(16)};top:${yp(parseInt(p))};height:${yp(1)};background:${tint[p.slice(-1)]}`)));
for (let r = 0; r <= 12; r++) el(N, 'div', 'row' + (r === 11 ? ' c' : ''), '', 'top:' + yp(r));
for (let c = 1; c <= 34; c++) el(N, 'div', 'col' + (c % 4 === 0 && c < 32 ? ' bar' : ''), '', 'left:' + xp(c * 4));
const rows = { G: 3, 'F#': 4, F: 5, E: 6, D: 8 };
`4 1 F rd ま|6 2 F rd ち|8 2 E cy を|10 3 F rd つ|14 2 F rd つ|16 6 D sk む|28 4 F rd あ|32 4 E rd め|36 2 E rd の|38 4 D pu か|42 6 E rd お|48 7 F# am り|62 2 F# am ひ|64 5 F am る|70 2 F am さ|72 4 E gy が|76 2 F am り|78 2 E gy に|84 2 E rd や|86 2 F gy さ|88 2 E rd し|90 5 D pu く|98 3 G pu と|101 3 F gy け|104 4 E gr て|108 4 D or い|112 5 E gr く`.split('|').forEach(s => {
  const [at, len, k, c, ly] = s.split(' ');
  el(N, 'div', 'note', k, `left:${xp(at)};width:${xp(len)};top:${yp(rows[k])};height:${yp(1)};background:${C[c]}`);
  el(N, 'div', 'lyric', ly, `left:${xp(at)};top:${yp(rows[k] - 1)}`);
});
el(N, 'i', 'mark0');
```
